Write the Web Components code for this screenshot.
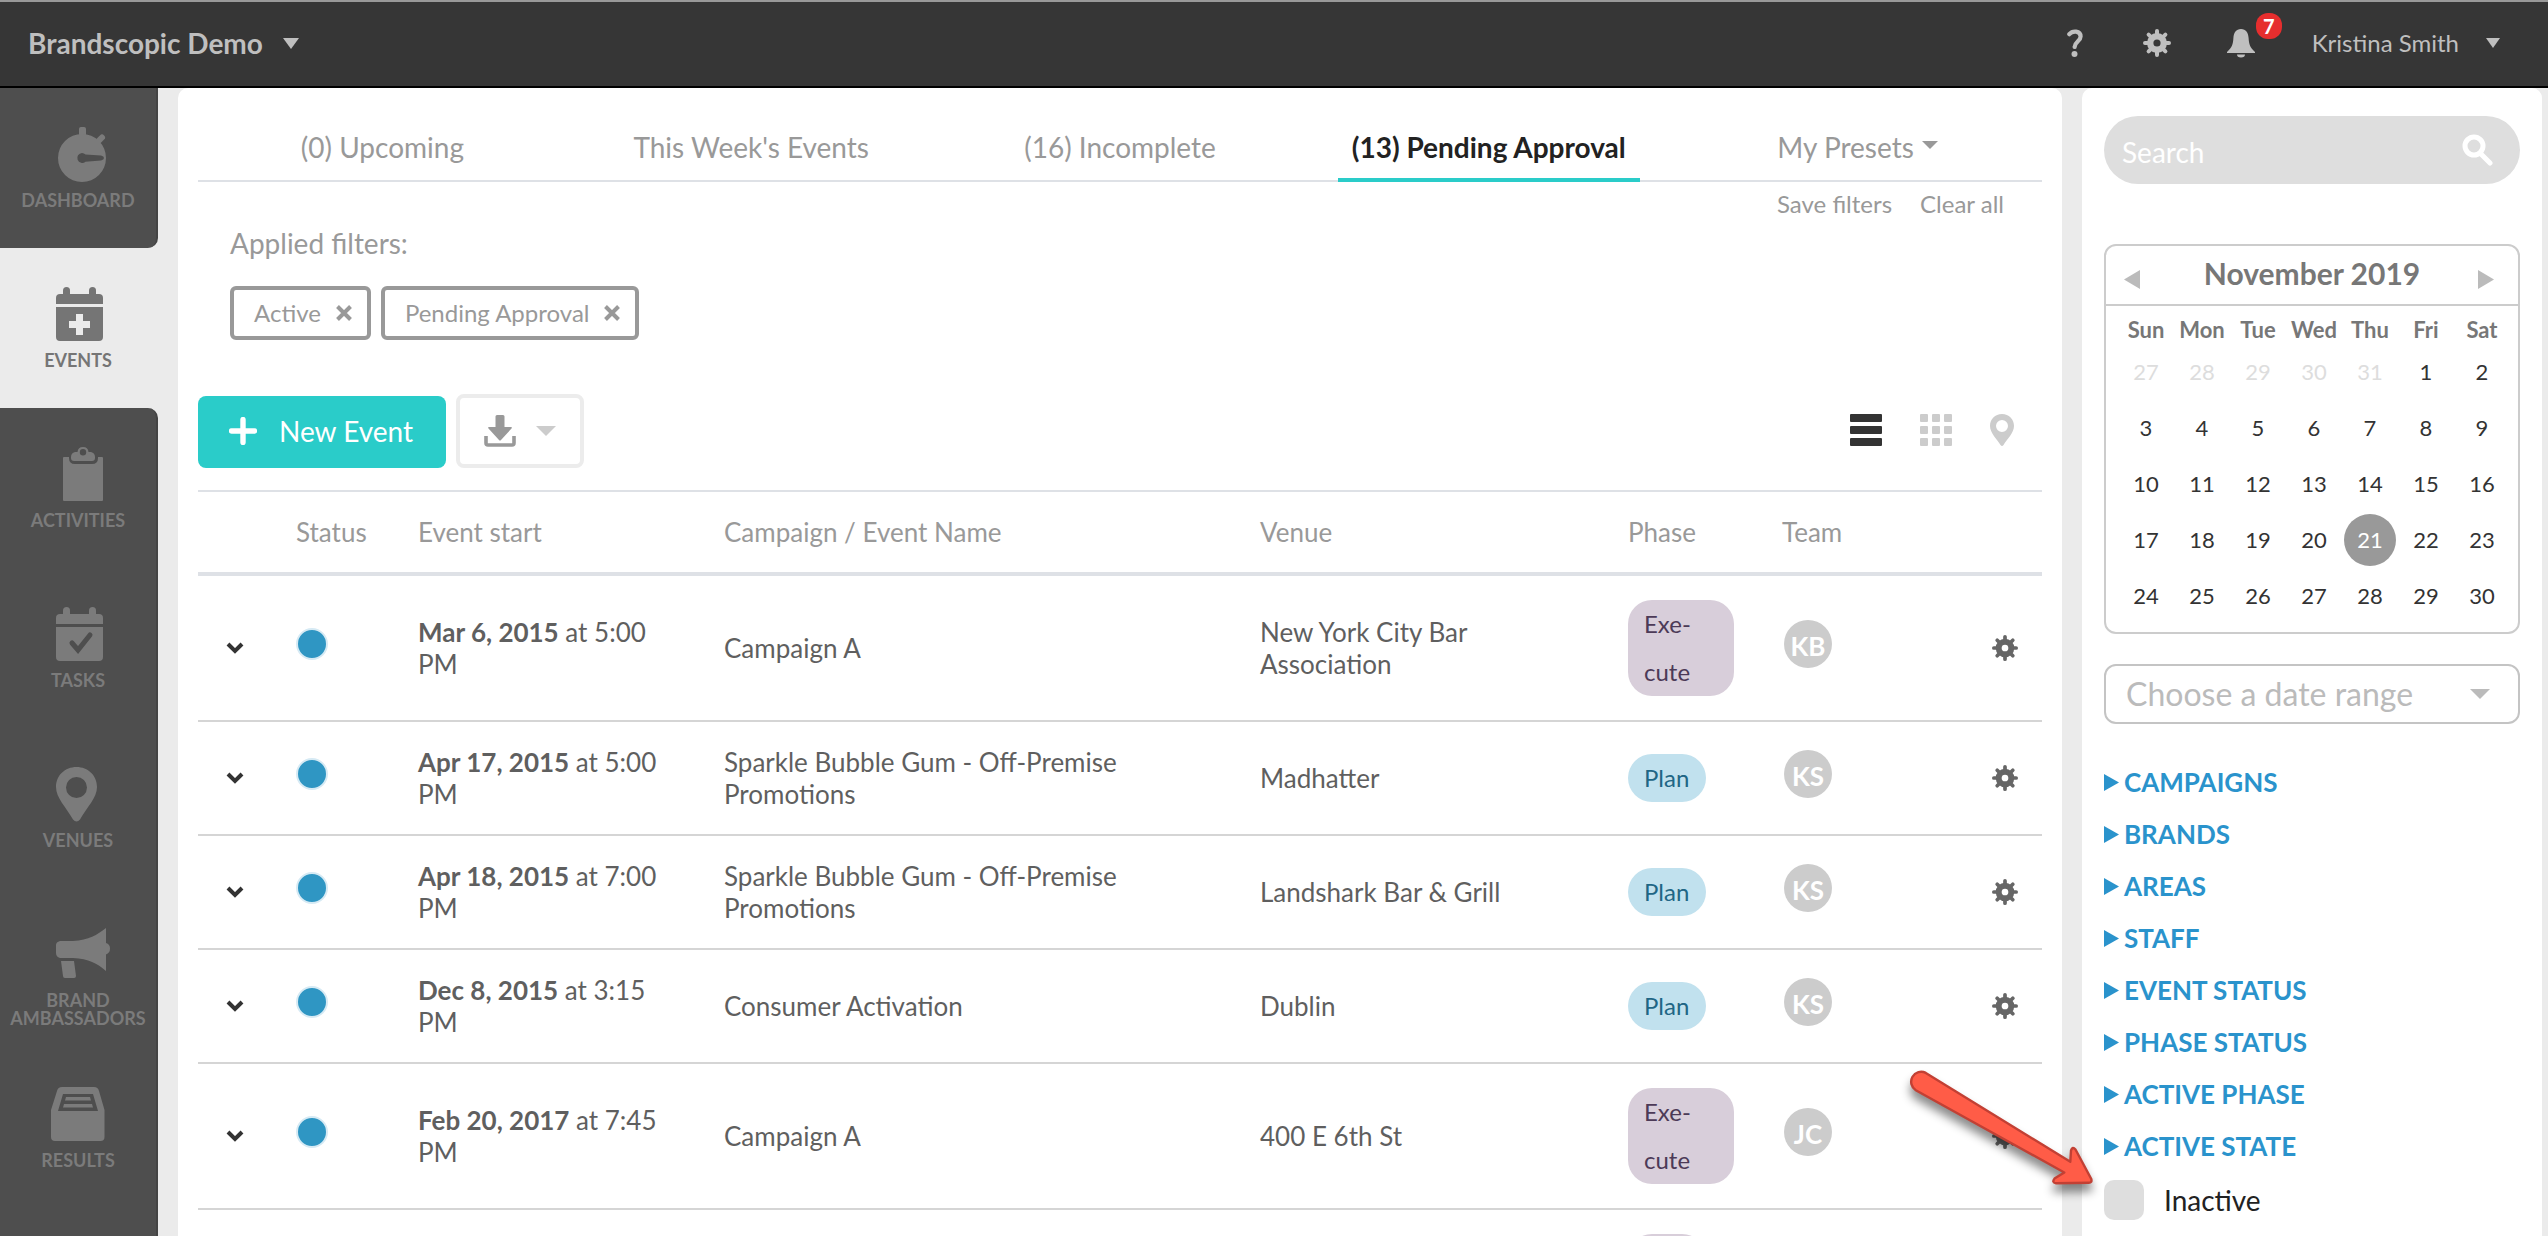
<!DOCTYPE html>
<html lang="en">
<head>
<meta charset="utf-8">
<title>Brandscopic Demo – Events</title>
<style>
  html, body { height: 100%; }
  body {
    margin: 0;
    overflow: hidden;
    background: #ebebeb;
    color: #5f5f5f;
    font-family: Lato, "Liberation Sans", sans-serif;
    font-size: 26px;
  }
</style>
</head>
<body>
<brand-app></brand-app>

<script>
const BASE = `
  *, *::before, *::after { box-sizing: border-box; }
  button, input, select { font: inherit; color: inherit; background: none; border: 0; margin: 0; padding: 0; }
  button, select, a { cursor: pointer; }
  a { color: inherit; text-decoration: none; }
  ul { list-style: none; margin: 0; padding: 0; }
  svg { display: block; flex: none; }
`;

function component(name, render) {
  customElements.define(name, class extends HTMLElement {
    connectedCallback() {
      if (this.shadowRoot) return;
      const template = document.createElement('template');
      const { css, html } = render(this);
      template.innerHTML = `<style>${BASE}${css}</style>${html}`;
      this.attachShadow({ mode: 'open' }).append(template.content.cloneNode(true));
    }
  });
}

const triangle = (dir, w, h) => {
  const points = {
    down: `0,0 ${w},0 ${w / 2},${h}`,
    left: `${w},0 ${w},${h} 0,${h / 2}`,
    right: `0,0 ${w},${h / 2} 0,${h}`
  }[dir];
  return `<svg width="${w}" height="${h}" viewBox="0 0 ${w} ${h}" aria-hidden="true"><polygon points="${points}" fill="currentColor"/></svg>`;
};

const gear = (size) => `
  <svg width="${size}" height="${size}" viewBox="0 0 28 28" fill="none" stroke="currentColor" aria-hidden="true">
    <circle cx="14" cy="14" r="6.800" stroke-width="6.400"/>
    <path d="M14 2v4M14 22v4M2 14h4M22 14h4M5.600 5.600l3 3M19.400 19.400l3 3M22.400 5.600l-3 3M8.600 19.400l-3 3" stroke-width="4" stroke-linecap="round"/>
  </svg>`;

const NAV_ICONS = {
  dashboard: `
    <path d="M30 0h3q2 0 2 2v7h-7V2q0-2 2-2z"/>
    <path d="M46 15.500L51 10.500" stroke="currentColor" stroke-width="6" stroke-linecap="round"/>
    <path fill-rule="evenodd" d="M31 7a24 24 0 1 1 0 48a24 24 0 1 1 0-48zM31 26a5 5 0 1 0 3.500 8.800L50 33.500q3-.8 3-2.500t-3-2.500L34.500 27.500A5 5 0 0 0 31 26z"/>`,
  events: `
    <rect x="12" y="0" width="7" height="12" rx="3.500"/><rect x="38" y="0" width="7" height="12" rx="3.500"/>
    <path d="M9 7h39q4 0 4 4v6H5v-6q0-4 4-4z"/>
    <path fill-rule="evenodd" d="M5 20h47v30q0 4-4 4H9q-4 0-4-4zM25 27v7h-7v7h7v7h7v-7h7v-7h-7v-7z"/>`,
  activities: `
    <path d="M12 11q0-1 1-1h5v1q0 6 6 6h17q6 0 6-6v-1h4q1 0 1 1v42q0 1-1 1H13q-1 0-1-1z"/>
    <path fill-rule="evenodd" d="M32 0q5 0 5.500 5h2.500q4 1 4 5v1q0 3-3 3H23q-3 0-3-3v-1q0-4 4-5h2.500Q27 0 32 0zM32 2a3.200 3.200 0 1 0 0 6.400a3.200 3.200 0 1 0 0-6.400z"/>`,
  tasks: `
    <rect x="12" y="0" width="7" height="12" rx="3.500"/><rect x="38" y="0" width="7" height="12" rx="3.500"/>
    <path d="M9 7h39q4 0 4 4v6H5v-6q0-4 4-4z"/>
    <path d="M5 20h47v30q0 4-4 4H9q-4 0-4-4z"/>
    <path d="M21 36l6 7 12-15" fill="none" stroke="#4e4e4e" stroke-width="5" stroke-linecap="round"/>`,
  venues: `
    <path fill-rule="evenodd" d="M25.500 0C37 0 46 8.500 46 20C46 31 36 40 29 52.500q-3.500 4-7 0C15 40 5 31 5 20C5 8.500 14 0 25.500 0zM25.500 10a10.500 10.500 0 1 0 0 21a10.500 10.500 0 1 0 0-21z"/>`,
  ambassadors: `
    <path d="M9 14h13C38 13 46 8 55 1v15q4 1 4 5.500T55 27.500V44C46 36 38 32 22 31H9q-4-1-4-5v-8q0-3 4-4z"/>
    <path d="M10 34h13l2 15q0 2-2 2H14q-2 0-2-2z"/>`,
  results: `
    <path fill-rule="evenodd" d="M11 0h32q4 0 5 4l5.500 19v27q0 4-4 4H4q-4 0-4-4V23L6 4q1-4 5-4zM12 7L7 24h40L42 7z"/>
    <path d="M15 10h24l1 3.500H14zM13 17h28l1 3.500H12z"/>`
};

/* ---------- Header ---------- */
component('app-header', () => ({
  css: `
    :host { display: block; }
    header { display: flex; align-items: center; height: 88px; padding: 0 48px 2px 28px;
      background: #363636; border-top: 2px solid #999; border-bottom: 2px solid #000; color: #bfbfbf; }
    button { display: flex; align-items: center; }
    .brand { gap: 20px; font-size: 28px; font-weight: 700; line-height: 32px; margin-right: auto; }
    .user { gap: 27px; font-size: 24px; line-height: 28px; margin-left: 57px; }
    .gear { margin: 0 56px 0 60px; }
    .bell { position: relative; }
    .badge { position: absolute; left: 29px; top: -16px; width: 26px; height: 26px; border-radius: 12px;
      background: #e62e2e; color: #fff; font-size: 20px; font-weight: 700; line-height: 26px; text-align: center; }
  `,
  html: `
    <header>
      <button class="brand">Brandscopic Demo ${triangle('down', 16, 11)}</button>
      <button aria-label="Help">
        <svg width="16" height="28" viewBox="0 0 16 28" aria-hidden="true">
          <path d="M2.300 5.200C5.500 1.400 13.600 1.400 13.600 7.600C13.600 12.200 8 12.400 7.600 18" fill="none" stroke="currentColor" stroke-width="4.200" stroke-linecap="round"/>
          <circle cx="7.500" cy="25" r="3" fill="currentColor"/>
        </svg>
      </button>
      <button class="gear" aria-label="Settings">${gear(28)}</button>
      <button class="bell" aria-label="Notifications">
        <svg width="28" height="29" viewBox="0 0 28 29" fill="currentColor" aria-hidden="true">
          <path d="M14 0c5 0 7.200 3.600 7.600 9 .4 6.500 1.400 9.500 6.400 14v1H0v-1c5-4.500 6-7.500 6.400-14C6.800 3.600 9 0 14 0z"/>
          <path d="M10 25.500h8a4 3 0 0 1-8 0z"/>
        </svg>
        <span class="badge">7</span>
      </button>
      <button class="user">Kristina Smith ${triangle('down', 14, 10)}</button>
    </header>`
}));

/* ---------- Side navigation ---------- */
component('nav-item', (el) => ({
  css: `
    :host { display: block; height: 160px; background: #4e4e4e; border-right: 2px solid #444; color: #7b7b7b; }
    :host([current]) { background: #ebebeb; border-color: #ebebeb; color: #757575; }
    :host([before-current]) { border-bottom-right-radius: 10px; }
    :host([after-current]) { border-top-right-radius: 10px; }
    a { display: flex; flex-direction: column; align-items: center; gap: 8px; padding-top: 39px;
      font-size: 18px; font-weight: 700; line-height: 18px; text-align: center; text-transform: uppercase; }
    svg { overflow: visible; }
  `,
  html: `<a href="#${el.getAttribute('icon')}">
      <svg width="60" height="56" viewBox="-3 0 60 56" fill="currentColor" aria-hidden="true">${NAV_ICONS[el.getAttribute('icon')]}</svg>
      <span><slot></slot></span>
    </a>`
}));

component('side-nav', () => ({
  css: `:host { display: block; flex: none; width: 158px; background: linear-gradient(90deg, #4e4e4e 156px, #444 156px) 0 480px no-repeat; }`,
  html: `<nav aria-label="Main">
      <nav-item icon="dashboard" before-current>Dashboard</nav-item>
      <nav-item icon="events" current>Events</nav-item>
      <nav-item icon="activities" after-current>Activities</nav-item>
      <nav-item icon="tasks">Tasks</nav-item>
      <nav-item icon="venues">Venues</nav-item>
      <nav-item icon="ambassadors">Brand Ambassadors</nav-item>
      <nav-item icon="results">Results</nav-item>
    </nav>`
}));

/* ---------- Tabs ---------- */
component('tab-link', () => ({
  css: `
    :host { display: flex; flex: 1 1 0; justify-content: center; margin-bottom: -2px; color: #999; }
    a { display: flex; padding: 43px 14px 15px; border-bottom: 4px solid transparent;
      font-size: 28px; line-height: 32px; white-space: nowrap; }
    :host([current]) { color: #222; }
    :host([current]) a { font-weight: 700; border-color: #2accc9; }
  `,
  html: `<a href="#"><slot></slot></a>`
}));

component('tab-bar', () => ({
  css: `
    :host { display: block; }
    nav { display: flex; border-bottom: 2px solid #dee1e6; }
    .actions { display: flex; justify-content: flex-end; gap: 28px; padding: 10px 38px 0 0;
      color: #999; font-size: 24px; line-height: 24px; }
    .drop { display: flex; gap: 8px; }
    .drop svg { margin-top: 10px; }
  `,
  html: `
    <nav aria-label="Event lists">
      <tab-link>(0) Upcoming</tab-link>
      <tab-link>This Week's Events</tab-link>
      <tab-link>(16) Incomplete</tab-link>
      <tab-link current>(13) Pending Approval</tab-link>
      <tab-link><span class="drop">My Presets ${triangle('down', 16, 8)}</span></tab-link>
    </nav>
    <div class="actions"><button>Save filters</button><button>Clear all</button></div>`
}));

/* ---------- Applied filters ---------- */
component('filter-chip', () => ({
  css: `
    :host { display: block; }
    button { display: flex; align-items: center; gap: 14px; height: 54px; padding: 0 14px 0 20px;
      border: 4px solid #999; border-radius: 6px; color: #999; font-size: 24px; line-height: 28px; }
  `,
  html: `<button><slot></slot>
      <svg width="18" height="18" viewBox="0 0 18 18" aria-hidden="true"><path d="M2.500 2.500l13 13M15.500 2.500l-13 13" stroke="currentColor" stroke-width="4"/></svg>
    </button>`
}));

component('applied-filters', () => ({
  css: `
    :host { display: block; padding: 11px 32px 0; }
    h2 { margin: 0 0 27px; color: #999; font-size: 28px; font-weight: 400; line-height: 32px; }
    div { display: flex; gap: 10px; }
  `,
  html: `<h2>Applied filters:</h2>
    <div><filter-chip>Active</filter-chip><filter-chip>Pending Approval</filter-chip></div>`
}));

/* ---------- Toolbar ---------- */
component('events-toolbar', () => ({
  css: `
    :host { display: flex; align-items: flex-end; gap: 10px; margin: 54px 0 22px; }
    .new { display: flex; align-items: center; gap: 22px; height: 72px; padding: 0 33px 2px 31px;
      border-radius: 8px; background: #2accc9; color: #fff; font-size: 28px; line-height: 32px; }
    .export { display: flex; align-items: center; gap: 20px; height: 74px; padding: 0 24px;
      border: 4px solid #ececec; border-radius: 8px; color: #999; }
    .export svg + svg { color: #ccc; }
    .views { display: flex; gap: 38px; margin-left: auto; padding: 0 28px 22px 0; color: #ccc; }
  `,
  html: `
    <button class="new">
      <svg width="28" height="28" viewBox="0 0 28 28" aria-hidden="true"><path d="M14 2.500v23M2.500 14h23" stroke="currentColor" stroke-width="5.400" stroke-linecap="round"/></svg>
      New Event
    </button>
    <button class="export" aria-label="Export">
      <svg width="32" height="32" viewBox="0 0 32 32" fill="currentColor" aria-hidden="true">
        <path d="M11.500 1.500Q11.500 0 13 0h6q1.500 0 1.500 1.500V12H27q1.500 0 .5 1.500L17 25q-1 1-2 0L4.500 13.500Q3.500 12 5 12h6.500z"/>
        <path d="M2 21v7q0 2 2 2h24q2 0 2-2v-7" fill="none" stroke="currentColor" stroke-width="3.600"/>
      </svg>
      ${triangle('down', 20, 10)}
    </button>
    <div class="views">
      <button aria-label="List view"><svg width="32" height="32" viewBox="0 0 32 32" fill="#333" aria-hidden="true">
        <rect width="32" height="8" rx="1"/><rect y="12" width="32" height="8" rx="1"/><rect y="24" width="32" height="8" rx="1"/></svg></button>
      <button aria-label="Grid view"><svg width="32" height="32" viewBox="0 0 32 32" fill="currentColor" aria-hidden="true">
        ${[0, 12, 24].map(y => [0, 12, 24].map(x => `<rect x="${x}" y="${y}" width="8" height="8" rx="1"/>`).join('')).join('')}</svg></button>
      <button aria-label="Map view"><svg width="24" height="32" viewBox="0 0 24 32" fill="currentColor" aria-hidden="true">
        <path fill-rule="evenodd" d="M12 0C19 0 24 5 24 12C24 19 17 25 13.500 31q-1.500 1.800-3 0C7 25 0 19 0 12C0 5 5 0 12 0zM12 6a6 6 0 1 0 0 12a6 6 0 1 0 0-12z"/></svg></button>
    </div>`
}));

/* ---------- Table parts ---------- */
component('phase-badge', () => ({
  css: `
    :host { display: block; width: fit-content; min-width: 78px; padding: 0 16px; border-radius: 24px; font-size: 24px; line-height: 48px; }
    :host([kind="execute"]) { min-height: 96px; background: #d8ceda; color: #4c3a57; }
    :host([kind="plan"]) { background: #c1e1ee; color: #1f6685; }
  `,
  html: `<slot></slot>`
}));

component('team-avatar', () => ({
  css: `:host { display: block; width: 48px; height: 48px; margin: 0 0 8px 2px; border-radius: 50%;
    background: #ccc; color: #fff; font-size: 26px; line-height: 52px; font-weight: 700; text-align: center; }`,
  html: `<slot></slot>`
}));

const EVENTS = [
  ['Mar 6, 2015', '5:00', 'PM', 'Campaign A', 'New York City Bar Association', 'execute', 'KB'],
  ['Apr 17, 2015', '5:00', 'PM', 'Sparkle Bubble Gum - Off-Premise Promotions', 'Madhatter', 'plan', 'KS'],
  ['Apr 18, 2015', '7:00', 'PM', 'Sparkle Bubble Gum - Off-Premise Promotions', 'Landshark Bar &amp; Grill', 'plan', 'KS'],
  ['Dec 8, 2015', '3:15', 'PM', 'Consumer Activation', 'Dublin', 'plan', 'KS'],
  ['Feb 20, 2017', '7:45', 'PM', 'Campaign A', '400 E 6th St', 'execute', 'JC']
];

component('events-table', () => ({
  css: `
    :host { display: block; }
    table { width: 100%; table-layout: fixed; border-collapse: separate; border-spacing: 0; border-top: 2px solid #dee1e6; line-height: 32px; }
    th { height: 84px; padding: 0 48px 0 0; border-bottom: 4px solid #dee1e6; color: #999; font-weight: 400; text-align: left; white-space: nowrap; }
    td { height: 114px; padding: 0 48px 0 0; border-bottom: 2px solid #d5d5d5; vertical-align: middle; }
    td.phase { padding-top: 24px; padding-bottom: 24px; }
    td.open { padding-left: 28px; color: #333; }
    td.open button { display: block; }
    td.menu { padding-right: 24px; }
    td.menu button { display: block; margin-left: auto; color: #666; }
    i { display: block; width: 32px; height: 32px; margin-bottom: 8px; border: 2px solid #d6eaf4; border-radius: 50%; background: #2f96c3; }
    .c1 { width: 98px; } .c2 { width: 122px; } .c3 { width: 306px; } .c5 { width: 368px; } .c6 { width: 154px; } .c7 { width: 100px; } .c8 { width: 160px; }
  `,
  html: `<table>
    <colgroup><col class="c1"><col class="c2"><col class="c3"><col><col class="c5"><col class="c6"><col class="c7"><col class="c8"></colgroup>
    <thead><tr><th></th><th>Status</th><th>Event start</th><th>Campaign / Event Name</th><th>Venue</th><th>Phase</th><th>Team</th><th></th></tr></thead>
    <tbody>${EVENTS.map(([date, time, half, name, venue, kind, team]) => `
      <tr>
        <td class="open"><button aria-label="Expand row"><svg width="18" height="12" viewBox="0 0 18 12" aria-hidden="true"><path d="M2 2l7 7 7-7" fill="none" stroke="currentColor" stroke-width="4"/></svg></button></td>
        <td><i></i></td>
        <td><b>${date}</b> at ${time} <span>${half}</span></td>
        <td>${name}</td>
        <td>${venue}</td>
        <td class="phase"><phase-badge kind="${kind}">${kind === 'plan' ? 'Plan' : 'Exe&shy;cute'}</phase-badge></td>
        <td><team-avatar>${team}</team-avatar></td>
        <td class="menu"><button aria-label="Event actions">${gear(26)}</button></td>
      </tr>`).join('')}
      <tr><td></td><td></td><td></td><td></td><td></td><td class="phase"><phase-badge kind="execute"></phase-badge></td><td></td><td></td></tr>
    </tbody>
  </table>`
}));

/* ---------- Filter panel ---------- */
component('search-box', () => ({
  css: `
    :host { display: block; }
    label { display: flex; align-items: center; height: 68px; padding: 0 26px 0 18px; border-radius: 34px; background: #dedede; color: #fff; }
    input { flex: 1; min-width: 0; outline: 0; font-size: 28px; line-height: 32px; padding-top: 4px; }
    input::placeholder { color: #fff; opacity: 1; }
  `,
  html: `<label><input type="text" placeholder="Search" aria-label="Search">
      <svg width="32" height="32" viewBox="0 0 32 32" fill="none" stroke="currentColor" aria-hidden="true">
        <circle cx="12" cy="12" r="9" stroke-width="5"/><path d="M19 20l9 9" stroke-width="5" stroke-linecap="round"/></svg>
    </label>`
}));

component('month-calendar', () => {
  const days = ['Sun', 'Mon', 'Tue', 'Wed', 'Thu', 'Fri', 'Sat'];
  const cells = [27, 28, 29, 30, 31, ...Array.from({ length: 30 }, (_, i) => i + 1)];
  const cell = (n, i) => i < 5 ? `<td class="other">${n}</td>` : n === 21 ? `<td><span class="today">${n}</span></td>` : `<td>${n}</td>`;
  const rows = [0, 1, 2, 3, 4].map(r => `<tr>${cells.slice(r * 7, r * 7 + 7).map((n, c) => cell(n, r * 7 + c)).join('')}</tr>`).join('');
  return {
    css: `
      :host { display: block; margin-top: 60px; border: 2px solid #ccc; border-radius: 12px; background: #fff; color: #333; }
      header { display: flex; align-items: center; height: 60px; padding: 0 24px 0 18px; border-bottom: 2px solid #ccc; }
      header button { color: #bbb; padding-top: 8px; }
      h2 { flex: 1; margin: 0; padding: 0 0 4px 6px; color: #777; font-size: 30px; font-weight: 700; line-height: 36px; text-align: center; }
      .body { padding: 0 8px 8px 12px; }
      table { width: 100%; table-layout: fixed; border-collapse: collapse; font-size: 22px; text-align: center; }
      th { height: 38px; padding: 10px 0 0; color: #777; font-weight: 700; line-height: 28px; }
      td { height: 56px; padding: 0; line-height: 28px; }
      .other { color: #ddd; }
      .today { display: inline-block; width: 52px; height: 52px; border-radius: 50%; background: #999; color: #fff; line-height: 52px; vertical-align: middle; }
    `,
    html: `
      <header><button aria-label="Previous month">${triangle('left', 16, 19)}</button><h2>November 2019</h2><button aria-label="Next month">${triangle('right', 16, 19)}</button></header>
      <div class="body"><table>
        <thead><tr>${days.map(d => `<th>${d}</th>`).join('')}</tr></thead>
        <tbody>${rows}</tbody>
      </table></div>`
  };
});

component('date-range', () => ({
  css: `
    :host { display: grid; align-items: center; margin: 30px 0 32px; color: #bbb; }
    select, svg { grid-area: 1 / 1; }
    select { appearance: none; width: 100%; height: 60px; padding: 0 60px 0 20px; border: 2px solid #c4c4c4; border-radius: 12px; background: #fff; font-size: 32px; line-height: 40px; }
    svg { justify-self: end; margin-right: 30px; pointer-events: none; }
  `,
  html: `<select aria-label="Date range"><option>Choose a date range</option></select>${triangle('down', 20, 10)}`
}));

component('filter-group', () => ({
  css: `
    :host { display: block; }
    button { display: flex; align-items: center; gap: 5px; color: #2a93cc; font-size: 26px; font-weight: 700; line-height: 52px; text-transform: uppercase; }
  `,
  html: `<button aria-expanded="false">${triangle('right', 15, 17)}<slot></slot></button>`
}));

component('check-option', () => ({
  css: `
    :host { display: block; margin-top: 8px; }
    label { display: flex; align-items: center; gap: 20px; color: #222; font-size: 28px; line-height: 40px; }
    input { appearance: none; width: 40px; height: 40px; border-radius: 10px; background: #dedede; }
  `,
  html: `<label><input type="checkbox"><slot></slot></label>`
}));

component('callout-arrow', () => ({
  css: `:host { display: block; pointer-events: none; } svg { overflow: visible; filter: drop-shadow(0 8px 5px rgba(0,0,0,.45)); }`,
  html: `<svg width="210" height="140" viewBox="0 0 210 140" aria-hidden="true">
      <path d="M25.800 12.900L170.300 101.800L171 90.500Q172.500 86 175.500 89.500L191.300 119Q192.200 122.800 188.800 122.800L156 123.200Q151.500 122.600 154.500 118.600L164.300 112.500L15.800 30.200A10 10 0 0 1 25.800 12.900z" fill="#ff5c47" stroke="#c24034" stroke-width="2.400" stroke-linejoin="round"/>
    </svg>`
}));

component('filter-panel', () => ({
  css: `
    :host { display: block; position: relative; flex: none; width: 460px; padding: 28px 22px 0; border-radius: 10px 10px 0 0; background: #fff; }
    callout-arrow { position: absolute; left: -182px; top: 972px; }
  `,
  html: `
    <search-box></search-box>
    <month-calendar></month-calendar>
    <date-range></date-range>
    <filter-group>Campaigns</filter-group>
    <filter-group>Brands</filter-group>
    <filter-group>Areas</filter-group>
    <filter-group>Staff</filter-group>
    <filter-group>Event Status</filter-group>
    <filter-group>Phase Status</filter-group>
    <filter-group>Active Phase</filter-group>
    <filter-group>Active State</filter-group>
    <check-option>Inactive</check-option>
    <callout-arrow></callout-arrow>`
}));

/* ---------- Page ---------- */
component('events-page', () => ({
  css: `:host { display: block; flex: 1; min-width: 0; padding: 0 20px; border-radius: 10px 10px 0 0; background: #fff; }`,
  html: `<tab-bar></tab-bar><applied-filters></applied-filters><events-toolbar></events-toolbar><events-table></events-table>`
}));

component('brand-app', () => ({
  css: `
    :host { display: flex; flex-direction: column; height: 100vh; overflow: hidden; }
    .layout { display: flex; gap: 20px; flex: 1; min-height: 0; padding-right: 6px; overflow: hidden; }
    events-page, filter-panel { height: max-content; min-height: 100%; }
  `,
  html: `<app-header></app-header>
    <div class="layout"><side-nav></side-nav><events-page></events-page><filter-panel></filter-panel></div>`
}));
</script>
</body>
</html>
